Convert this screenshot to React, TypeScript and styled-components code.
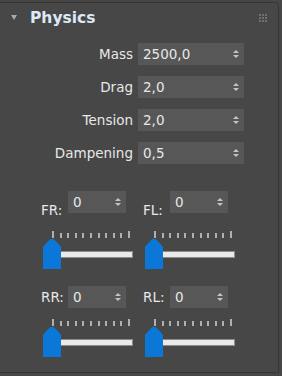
import React from "react";
import styled, { createGlobalStyle } from "styled-components";

const Global = createGlobalStyle`
  html, body { margin: 0; padding: 0; background: #464646; }
  body { width: 282px; height: 376px; overflow: hidden; padding-top: 2px; box-sizing: border-box; }
`;

const Panel = styled.section`
  width: 279px;
  height: 371px;
  box-sizing: border-box;
  background: #474747;
  border: 1px solid #363636;
  border-left: none;
  border-top-right-radius: 5px;
  display: flex;
  flex-direction: column;
  font-family: "DejaVu Sans", sans-serif;
`;

const Header = styled.header`
  height: 30px;
  display: flex;
  align-items: center;
  padding: 0 10px 0 11px;
`;

const Caret = styled.span`
  width: 0;
  height: 0;
  border-left: 3px solid transparent;
  border-right: 3px solid transparent;
  border-top: 5px solid #a9a9a9;
  margin-right: 13px;
  margin-top: -1px;
`;

const Title = styled.h2`
  margin: 0;
  font-size: 15.5px;
  font-weight: bold;
  color: #dde9f7;
  flex: 1;
  line-height: 18px;
`;

const Fields = styled.div`
  display: grid;
  grid-template-columns: 133px 106px;
  column-gap: 5px;
  row-gap: 11px;
  margin-top: 10px;
`;

const FieldLabel = styled.label`
  text-align: right;
  font-size: 13.5px;
  color: #e8e8e8;
  align-self: center;
`;

const SpinBox = styled.div<{ $w: number }>`
  width: ${(p) => p.$w}px;
  height: 22px;
  box-sizing: border-box;
  background: #575757;
  display: flex;
  align-items: center;
  padding: 0 4px 0 5px;
  font-size: 13.5px;
  color: #e8e8e8;
`;

const SpinValue = styled.span`
  flex: 1;
`;

const Arrows = styled.span`
  display: flex;
  flex-direction: column;
  gap: 2px;
  margin-right: 1px;
`;

const Arrow = styled.span<{ $up?: boolean }>`
  width: 0;
  height: 0;
  border-left: 3px solid transparent;
  border-right: 3px solid transparent;
  ${(p) => (p.$up ? "border-bottom: 3px solid #c4c4c4;" : "border-top: 3px solid #c4c4c4;")}
`;

const Wheels = styled.div`
  display: grid;
  grid-template-columns: 102px 102px;
  row-gap: 17px;
  padding-left: 41px;
  margin-top: 27px;
`;

const Wheel = styled.div`
  display: flex;
  flex-direction: column;
`;

const WheelHead = styled.div<{ $low: boolean }>`
  display: flex;
  align-items: ${(p) => (p.$low ? "flex-end" : "center")};
`;

const WheelLabel = styled.span<{ $low: boolean }>`
  width: 27px;
  font-size: 13.5px;
  color: #e8e8e8;
  line-height: 15px;
  margin-bottom: ${(p) => (p.$low ? "-5px" : "0")};
`;

const Ticks = styled.div<{ $gap: number }>`
  display: flex;
  justify-content: space-between;
  align-items: flex-end;
  width: 78px;
  height: 7px;
  margin: ${(p) => p.$gap}px 0 0 11px;
`;

const Tick = styled.span<{ $tall: boolean }>`
  width: 2px;
  height: ${(p) => (p.$tall ? 7 : 5)}px;
  background: #b0b0b0;
`;

const Slider = styled.div`
  position: relative;
  width: 90px;
  height: 30px;
  margin: 1px 0 0 2px;
  display: flex;
  align-items: flex-start;
`;

const Track = styled.div`
  margin-top: 12px;
  width: 90px;
  height: 7px;
  box-sizing: border-box;
  background: #e9e9e9;
  border: 1px solid #8c8c8c;
`;

const Thumb = styled.div`
  position: absolute;
  left: 0;
  top: 0;
  width: 18px;
  height: 30px;
  background: #0b77d6;
  clip-path: polygon(40% 0, 60% 0, 100% 26%, 100% 100%, 0 100%, 0 26%);
`;

const Grip = () => (
  <svg width="10" height="10" viewBox="0 0 10 10">
    {[0, 3, 6].map((y) =>
      [0, 3, 6].map((x) => <rect key={`${x}-${y}`} x={x + 1} y={y + 1} width="2" height="2" fill="#6f6f6f" />)
    )}
  </svg>
);

const Spin = ({ value, w }: { value: string; w: number }) => (
  <SpinBox $w={w}>
    <SpinValue>{value}</SpinValue>
    <Arrows>
      <Arrow $up />
      <Arrow />
    </Arrows>
  </SpinBox>
);

const fields = [
  ["Mass", "2500,0"],
  ["Drag", "2,0"],
  ["Tension", "2,0"],
  ["Dampening", "0,5"],
];

const wheels = [
  { name: "FR:", low: true },
  { name: "FL:", low: true },
  { name: "RR:", low: false },
  { name: "RL:", low: false },
];

export default function App() {
  return (
    <>
      <Global />
      <Panel>
        <Header>
          <Caret />
          <Title>Physics</Title>
          <Grip />
        </Header>
        <Fields>
          {fields.map(([l, v]) => (
            <React.Fragment key={l}>
              <FieldLabel>{l}</FieldLabel>
              <Spin value={v} w={106} />
            </React.Fragment>
          ))}
        </Fields>
        <Wheels>
          {wheels.map((w) => (
            <Wheel key={w.name}>
              <WheelHead $low={w.low}>
                <WheelLabel $low={w.low}>{w.name}</WheelLabel>
                <Spin value="0" w={58} />
              </WheelHead>
              <Ticks $gap={w.low ? 18 : 11}>
                {Array.from({ length: 11 }).map((_, i) => (
                  <Tick key={i} $tall={i === 0 || i === 10} />
                ))}
              </Ticks>
              <Slider>
                <Track />
                <Thumb />
              </Slider>
            </Wheel>
          ))}
        </Wheels>
      </Panel>
    </>
  );
}
